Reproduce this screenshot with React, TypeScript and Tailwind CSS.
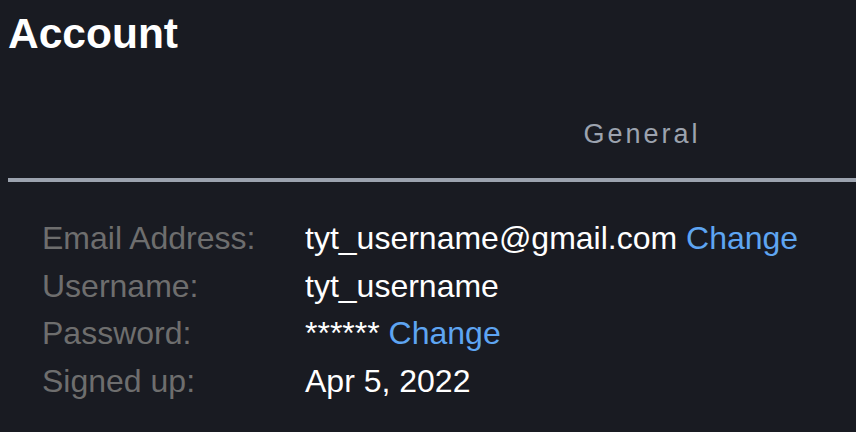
import React from 'react';

const rows: { label: string; value: string; change?: boolean }[] = [
  { label: 'Email Address:', value: 'tyt_username@gmail.com', change: true },
  { label: 'Username:', value: 'tyt_username' },
  { label: 'Password:', value: '******', change: true },
  { label: 'Signed up:', value: 'Apr 5, 2022' },
];

export default function App() {
  return (
    <div className="min-h-[432px] w-[856px] overflow-hidden bg-[#191b22] pl-2 font-['Liberation_Sans',Arial,sans-serif] text-white">
      <h1 className="pt-[9px] text-[42.5px] font-bold leading-[50px]">Account</h1>

      {/* Tabs */}
      <div className="mt-[60px] grid grid-cols-2 border-b-4 border-[#9ca3af]">
        <div />
        <div className="-ml-1 pb-[29px] text-center text-[27px] leading-[30px] tracking-[3px] text-[#9ca3af]">
          General
        </div>
      </div>

      {/* Details */}
      <div className="mt-[33px] flex flex-col pl-[34px] text-[32px] leading-[47.5px]">
        {rows.map((r) => (
          <div key={r.label} className="flex">
            <span className="w-[263px] shrink-0 text-[#6e6e6e]">{r.label}</span>
            <span>
              {r.value}
              {r.change && <span className="text-[#5ea5f2]"> Change</span>}
            </span>
          </div>
        ))}
      </div>
    </div>
  );
}
